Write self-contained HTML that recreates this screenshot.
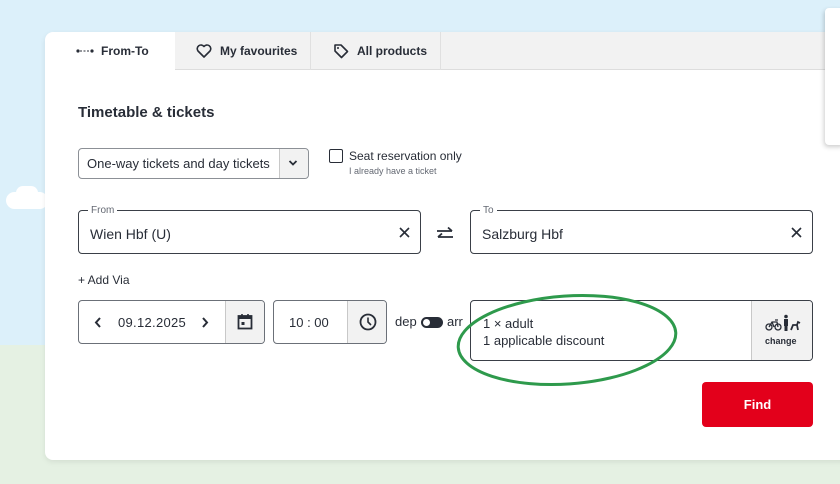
<!DOCTYPE html>
<html><head><meta charset="utf-8"><style>
*{box-sizing:border-box;margin:0;padding:0}
body{width:840px;height:484px;overflow:hidden;position:relative;font-family:"Liberation Sans","DejaVu Sans",sans-serif;color:#282d37;background:#dcf0fa}
.a{position:absolute}
.green{left:0;top:340px;width:840px;height:144px;background:#e5f1e3}
.card{left:45px;top:32px;width:820px;height:428px;background:#fff;border-radius:8px;box-shadow:0 2px 6px rgba(0,0,0,.08)}
.tabbar{left:175px;top:32px;width:665px;height:38px;background:#f2f2f2;border-bottom:1px solid #ddd}
.tab{top:32px;height:38px;font-size:12px;font-weight:bold;display:flex;align-items:center;color:#282d37}
.sep{top:32px;width:1px;height:38px;background:#e0e0e0}
.box{border:1px solid #3a3f47;border-radius:4px;background:#fff}
.gray{background:#f2f2f2;border-left:1px solid #c8c8c8}
.lbl{font-size:10px;color:#646973;background:#fff;padding:0 3px}
</style></head><body>
<div class="a green"></div>
<div class="a" style="left:0;top:185px;width:45px;height:160px;background:#dcf0fa"></div>
<div class="a" style="left:6px;top:192px;width:42px;height:17px;background:#fff;border-radius:9px"></div>
<div class="a" style="left:16px;top:186px;width:22px;height:14px;background:#fff;border-radius:8px"></div>
<div class="a card"></div>
<div class="a tabbar"></div>
<div class="a sep" style="left:310px"></div>
<div class="a sep" style="left:440px"></div>
<div class="a" style="left:825px;top:8px;width:20px;height:137px;background:#fff;border-radius:4px;box-shadow:-1px 2px 5px rgba(0,0,0,.2)"></div>
<div class="a tab" style="left:76px"><svg width="18" height="6" style="margin-right:7px"><circle cx="2" cy="3" r="1.6" fill="#282d37"/><line x1="4" y1="3" x2="14" y2="3" stroke="#282d37" stroke-width="1" stroke-dasharray="2 1.5"/><circle cx="16" cy="3" r="1.6" fill="#282d37"/></svg>From-To</div>
<div class="a tab" style="left:196px"><svg width="16" height="14" style="margin-right:8px" viewBox="0 0 16 14"><path d="M8 13 L2 7 A3.3 3.3 0 0 1 8 2.5 A3.3 3.3 0 0 1 14 7 Z" fill="none" stroke="#282d37" stroke-width="1.6" stroke-linejoin="round"/></svg>My favourites</div>
<div class="a tab" style="left:333px"><svg width="16" height="16" style="margin-right:8px" viewBox="0 0 16 16"><path d="M2 2 H8 L14.5 8.5 L8.5 14.5 L2 8 Z" fill="none" stroke="#282d37" stroke-width="1.6" stroke-linejoin="round"/><circle cx="5" cy="5" r="1" fill="#282d37"/></svg>All products</div>
<div class="a" style="left:78px;top:104px;font-size:15px;font-weight:bold">Timetable &amp; tickets</div>
<div class="a box" style="left:78px;top:148px;width:231px;height:31px;border-color:#8c9096"></div>
<div class="a" style="left:87px;top:156px;font-size:13px">One-way tickets and day tickets</div>
<div class="a" style="left:279px;top:149px;width:29px;height:29px;background:#f2f2f2;border-left:1px solid #c8c8c8;border-radius:0 4px 4px 0"></div>
<svg class="a" style="left:288px;top:159px" width="10" height="8"><path d="M1.5 2 L5 5.5 L8.5 2" fill="none" stroke="#282d37" stroke-width="1.8"/></svg>
<div class="a" style="left:329px;top:149px;width:14px;height:14px;border:1.5px solid #282d37;border-radius:2px"></div>
<div class="a" style="left:349px;top:149px;font-size:12px">Seat reservation only</div>
<div class="a" style="left:349px;top:166px;font-size:9px;color:#646973">I already have a ticket</div>
<div class="a box" style="left:78px;top:210px;width:343px;height:44px"></div>
<div class="a lbl" style="left:88px;top:205px">From</div>
<div class="a" style="left:90px;top:226px;font-size:14px">Wien Hbf (U)</div>
<svg class="a" style="left:399px;top:227px" width="11" height="11"><path d="M1 1 L10 10 M10 1 L1 10" stroke="#282d37" stroke-width="1.6"/></svg>
<svg class="a" style="left:436px;top:226px" width="18" height="16"><path d="M1 5 H16 M12 1.5 L16 5 M17 11 H2 M6 7.5 L2 11" fill="none" stroke="#282d37" stroke-width="1.8"/></svg>
<div class="a box" style="left:470px;top:210px;width:343px;height:44px"></div>
<div class="a lbl" style="left:480px;top:205px">To</div>
<div class="a" style="left:482px;top:226px;font-size:14px">Salzburg Hbf</div>
<svg class="a" style="left:791px;top:227px" width="11" height="11"><path d="M1 1 L10 10 M10 1 L1 10" stroke="#282d37" stroke-width="1.6"/></svg>
<div class="a" style="left:78px;top:273px;font-size:12px">+ Add Via</div>
<div class="a box" style="left:78px;top:300px;width:187px;height:44px;border-color:#6b7078;overflow:hidden"><div class="a gray" style="left:146px;top:0;width:40px;height:42px"></div></div>
<svg class="a" style="left:94px;top:317px" width="8" height="11"><path d="M6 1 L2 5.5 L6 10" fill="none" stroke="#282d37" stroke-width="2"/></svg>
<div class="a" style="left:118px;top:315px;font-size:13px;letter-spacing:.3px">09.12.2025</div>
<svg class="a" style="left:201px;top:317px" width="8" height="11"><path d="M2 1 L6 5.5 L2 10" fill="none" stroke="#282d37" stroke-width="2"/></svg>
<svg class="a" style="left:237px;top:313px" width="16" height="17"><rect x="1.5" y="3" width="13" height="12.5" fill="none" stroke="#282d37" stroke-width="1.8"/><rect x="1.5" y="3" width="13" height="3" fill="#282d37"/><path d="M5 1 V4 M11 1 V4" stroke="#282d37" stroke-width="1.6"/><rect x="4.5" y="9" width="3" height="3" fill="#282d37"/></svg>
<div class="a box" style="left:273px;top:300px;width:114px;height:44px;border-color:#6b7078;overflow:hidden"><div class="a gray" style="left:73px;top:0;width:40px;height:42px"></div></div>
<div class="a" style="left:289px;top:315px;font-size:13px">10 : 00</div>
<svg class="a" style="left:359px;top:313px" width="18" height="18"><circle cx="9" cy="9" r="7.5" fill="none" stroke="#282d37" stroke-width="1.8"/><path d="M9 4.5 V9 L12 12" fill="none" stroke="#282d37" stroke-width="1.6"/></svg>
<div class="a" style="left:395px;top:314px;font-size:13px">dep</div>
<div class="a" style="left:421px;top:317px;width:22px;height:11px;background:#282d37;border-radius:6px"><div style="position:absolute;left:2px;top:2px;width:7px;height:7px;background:#fff;border-radius:50%"></div></div>
<div class="a" style="left:447px;top:314px;font-size:13px">arr</div>
<div class="a box" style="left:470px;top:300px;width:343px;height:61px;overflow:hidden"><div class="a gray" style="left:280px;top:0;width:62px;height:59px"></div></div>
<div class="a" style="left:483px;top:315px;font-size:13px;line-height:17px">1 × adult<br>1 applicable discount</div>
<svg class="a" style="left:765px;top:314px" width="36" height="18" viewBox="0 0 36 18"><circle cx="4" cy="13" r="3" fill="none" stroke="#282d37" stroke-width="1.3"/><circle cx="13" cy="13" r="3" fill="none" stroke="#282d37" stroke-width="1.3"/><path d="M4 13 L7 8 H12 L13 13 M7 8 L9 13 M10 6 H13" fill="none" stroke="#282d37" stroke-width="1.3"/><circle cx="21" cy="2.5" r="1.8" fill="#282d37"/><rect x="19" y="5" width="4" height="7" fill="#282d37"/><rect x="19.5" y="11" width="3" height="6" fill="#282d37"/><path d="M26 16 L28 11 H32 L33 16 M32 11 L33 8 L35 9" fill="none" stroke="#282d37" stroke-width="1.8"/></svg>
<div class="a" style="left:765px;top:336px;font-size:9px;font-weight:bold">change</div>
<div class="a" style="left:702px;top:382px;width:111px;height:45px;background:#e3001b;border-radius:4px;color:#fff;font-size:13px;font-weight:bold;display:flex;align-items:center;justify-content:center">Find</div>
<svg class="a" style="left:0;top:0" width="840" height="484"><ellipse cx="567" cy="340" rx="109" ry="44" transform="rotate(-4 567 340)" fill="none" stroke="#2e9a4c" stroke-width="3"/></svg>
</body></html>
